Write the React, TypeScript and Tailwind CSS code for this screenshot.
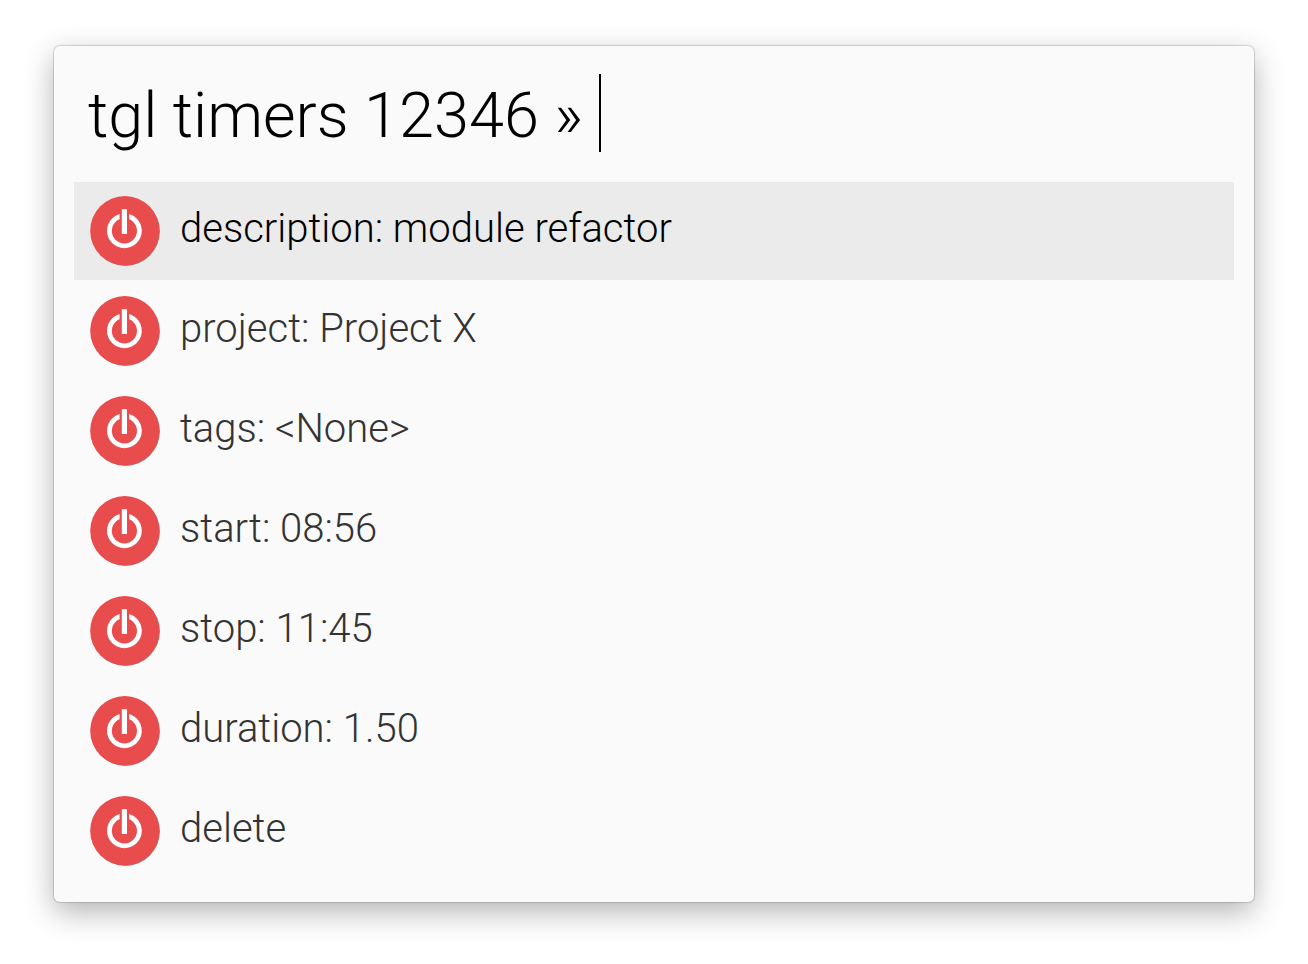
import { useState } from "react";

const items = [
  "description: module refactor",
  "project: Project X",
  "tags: <None>",
  "start: 08:56",
  "stop: 11:45",
  "duration: 1.50",
  "delete",
];

function PowerIcon() {
  return (
    <svg viewBox="0 0 70 70" className="size-[70px] shrink-0" aria-hidden="true">
      <circle cx="35.4" cy="35.4" r="34.5" fill="#9a8080" />
      <circle cx="34.8" cy="34.7" r="34.6" fill="#e84c4c" />
      <circle cx="34.4" cy="34.8" r="15" fill="none" stroke="#fff" strokeWidth="4.8" />
      <rect x="29.6" y="12" width="9.6" height="14" fill="#e84c4c" />
      <rect x="31.8" y="13.2" width="5.2" height="24.8" fill="#fff" />
    </svg>
  );
}

export default function App() {
  const [query, setQuery] = useState("tgl timers 12346 »");
  const [selected, setSelected] = useState(0);

  return (
    <main className="min-h-screen bg-white px-[54px] pt-[46px] pb-[62px] font-['Roboto','Liberation_Sans',sans-serif] font-light">
      <section className="rounded-md bg-[#fafafa] px-5 pt-7 pb-[22px] shadow-[0_0_1px_1px_rgba(0,0,0,0.15),0_10px_30px_rgba(0,0,0,0.3)]">
        <div className="mb-[30px] flex h-[78px] items-center gap-4 pl-[14px]">
          <input
            type="text"
            aria-label="Search"
            value={query}
            onChange={(event) => setQuery(event.target.value)}
            className="h-[84px] field-sizing-content bg-transparent pt-1 text-[63px] leading-[80px] text-black caret-transparent outline-none"
          />
          <span className="h-full w-0.5 bg-black" />
        </div>
        <ul className="flex flex-col gap-0.5">
          {items.map((item, index) => (
            <li key={item}>
              <button
                type="button"
                onClick={() => setSelected(index)}
                className={
                  index === selected
                    ? "flex h-[98px] w-full items-center gap-5 bg-[#ebebeb] px-4 text-left text-[40px] leading-[48px] text-black"
                    : "flex h-[98px] w-full items-center gap-5 px-4 text-left text-[40px] leading-[48px] text-[#333]"
                }
              >
                <PowerIcon />
                <span className="pb-1">{item}</span>
              </button>
            </li>
          ))}
        </ul>
      </section>
    </main>
  );
}
